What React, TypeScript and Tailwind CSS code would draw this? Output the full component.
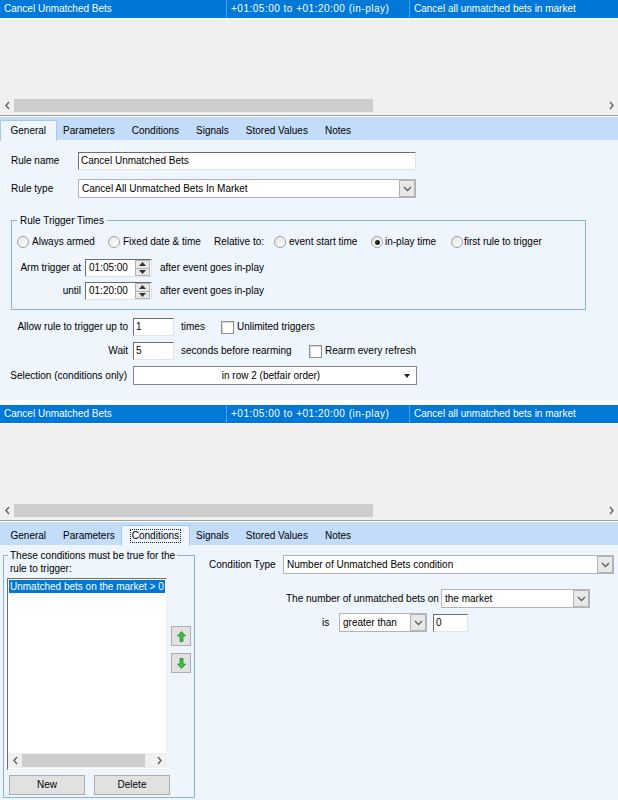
import React from "react"

const TABS = ["General", "Parameters", "Conditions", "Signals", "Stored Values", "Notes"]

function Chevron({ dir }: { dir: "left" | "right" | "down" }) {
  const d = dir === "left" ? "M5 1 L2 4.5 L5 8" : dir === "right" ? "M2 1 L5 4.5 L2 8" : "M1 2 L4.5 5.5 L8 2"
  const w = dir === "down" ? 9 : 7
  const h = dir === "down" ? 7 : 9
  return (
    <svg width={w} height={h} viewBox={`0 0 ${w} ${h}`} fill="none">
      <path d={d} stroke="#606060" strokeWidth="1.4" />
    </svg>
  )
}

function HScroll({ thumb }: { thumb: number }) {
  return (
    <div className="h-[15px] flex items-center bg-[#f0f0f0]">
      <div className="w-[14px] h-full flex items-center justify-center">
        <Chevron dir="left" />
      </div>
      <div className="flex-1 h-full flex items-center">
        <div className="h-[13px] bg-[#cdcdcd]" style={{ width: thumb }} />
      </div>
      <div className="w-[14px] h-full flex items-center justify-center">
        <Chevron dir="right" />
      </div>
    </div>
  )
}

function RuleList() {
  return (
    <div className="h-[116px] flex flex-col bg-[#f0f0f0] border-b border-b-[#a0a0a0]">
      <div className="h-[19px] flex bg-[#0078d7] text-white border-b border-white">
        <div className="w-[227px] pl-[4px] flex items-center border-r border-[#4ba1e4]">Cancel Unmatched Bets</div>
        <div className="w-[183px] pl-[4px] flex items-center border-r border-[#4ba1e4] tracking-[0.5px]">
          +01:05:00 to +01:20:00 (in-play)
        </div>
        <div className="flex-1 pl-[4px] flex items-center">Cancel all unmatched bets in market</div>
      </div>
      <div className="flex-1" />
      <HScroll thumb={359} />
      <div className="h-[2px]" />
    </div>
  )
}

function TabStrip({ active, focused }: { active: string; focused?: boolean }) {
  return (
    <div className="h-[24px] flex items-end pl-[2px] bg-[#c3dcf9] border-t border-white">
      {TABS.map((t) =>
        t === active ? (
          <div
            key={t}
            className={`relative -mx-[2px] ${focused ? "px-[7.5px]" : "px-[9.5px]"} h-[21px] -mb-[1px] flex items-center bg-[#eef5fd] border border-b-0 border-[#a9c8ef] rounded-t-[2px] z-10`}
          >
            {focused ? (
              <span className="border border-dotted border-[#222] px-[1px] leading-[12px]">{t}</span>
            ) : (
              t
            )}
          </div>
        ) : (
          <div key={t} className="px-[8.5px] h-[19px] flex items-center">
            {t}
          </div>
        )
      )}
    </div>
  )
}

function Radio({ checked }: { checked?: boolean }) {
  return (
    <span className="w-[12px] h-[12px] rounded-full border border-[#a0a0a0] bg-gradient-to-br from-[#e4e4e4] to-white flex items-center justify-center shrink-0">
      {checked && <span className="w-[5px] h-[5px] rounded-full bg-[#222]" />}
    </span>
  )
}

function Check() {
  return <span className="w-[13px] h-[13px] border border-[#8f8f8f] bg-white shrink-0 shadow-[inset_1px_1px_1px_#d8d8d8]" />
}

function TextBox({ w, value }: { w: number; value: string }) {
  return (
    <div
      className="h-[18px] bg-white border border-[#e3e3e3] border-t-[#6d6d6d] border-l-[#6d6d6d] flex items-center pl-[2px]"
      style={{ width: w }}
    >
      {value}
    </div>
  )
}

function Combo({ w, value }: { w: number; value: string }) {
  return (
    <div className="h-[19px] bg-white border border-[#b4b4b4] flex items-center" style={{ width: w }}>
      <span className="flex-1 pl-[3px]">{value}</span>
      <span className="w-[16px] h-[17px] bg-[#e8e8e8] border border-[#b4b4b4] flex items-center justify-center">
        <Chevron dir="down" />
      </span>
    </div>
  )
}

function TimeBox({ value }: { value: string }) {
  return (
    <div className="w-[67px] h-[18px] bg-white border border-[#e3e3e3] border-t-[#6d6d6d] border-l-[#6d6d6d] flex items-center">
      <span className="flex-1 pl-[3px]">{value}</span>
      <span className="w-[15px] h-[16px] flex flex-col bg-[#e8e8e8] border border-[#b4b4b4] mr-[1px]">
        <span className="flex-1 flex items-center justify-center border-b border-[#b4b4b4]">
          <svg width="7" height="4" viewBox="0 0 7 4"><path d="M0 4 L3.5 0 L7 4 Z" fill="#333" /></svg>
        </span>
        <span className="flex-1 flex items-center justify-center">
          <svg width="7" height="4" viewBox="0 0 7 4"><path d="M0 0 L3.5 4 L7 0 Z" fill="#333" /></svg>
        </span>
      </span>
    </div>
  )
}

function GeneralTab() {
  return (
    <div className="flex-1 bg-[#eef5fd] pt-[12px]">
      <div className="flex items-center h-[18px] pl-[11px]">
        <span className="w-[67px]">Rule name</span>
        <TextBox w={338} value="Cancel Unmatched Bets" />
      </div>
      <div className="flex items-center h-[19px] mt-[9px] pl-[11px]">
        <span className="w-[67px]">Rule type</span>
        <Combo w={338} value="Cancel All Unmatched Bets In Market" />
      </div>

      <div className="relative ml-[11px] mt-[22px] w-[575px] h-[90px] border border-[#88b0e8]">
        <span className="absolute -top-[7px] left-[5px] px-[3px] bg-[#eef5fd] leading-[13px]">Rule Trigger Times</span>
        <div className="flex items-center h-[14px] mt-[14px] ml-[5px]">
          <div className="w-[91px] flex items-center gap-[3px]"><Radio /><span>Always armed</span></div>
          <div className="w-[106px] flex items-center gap-[3px]"><Radio /><span>Fixed date &amp; time</span></div>
          <div className="w-[60px]">Relative to:</div>
          <div className="w-[97px] flex items-center gap-[3px]"><Radio /><span>event start time</span></div>
          <div className="w-[80px] flex items-center gap-[2px]"><Radio checked /><span>in-play time</span></div>
          <div className="flex items-center gap-[1px]"><Radio /><span>first rule to trigger</span></div>
        </div>
        <div className="flex items-center h-[18px] mt-[10px]">
          <span className="w-[69px] text-right">Arm trigger at</span>
          <span className="ml-[4px]"><TimeBox value="01:05:00" /></span>
          <span className="ml-[8px]">after event goes in-play</span>
        </div>
        <div className="flex items-center h-[18px] mt-[5px]">
          <span className="w-[69px] text-right">until</span>
          <span className="ml-[4px]"><TimeBox value="01:20:00" /></span>
          <span className="ml-[8px]">after event goes in-play</span>
        </div>
      </div>

      <div className="flex items-center h-[18px] mt-[8px]">
        <span className="w-[128px] text-right">Allow rule to trigger up to</span>
        <span className="ml-[5px]"><TextBox w={41} value="1" /></span>
        <span className="ml-[7px] w-[40px]">times</span>
        <Check />
        <span className="ml-[3px]">Unlimited triggers</span>
      </div>
      <div className="flex items-center h-[18px] mt-[6px]">
        <span className="w-[128px] text-right">Wait</span>
        <span className="ml-[5px]"><TextBox w={41} value="5" /></span>
        <span className="ml-[7px] w-[128px]">seconds before rearming</span>
        <Check />
        <span className="ml-[3px]">Rearm every refresh</span>
      </div>
      <div className="flex items-center h-[19px] mt-[6px]">
        <span className="w-[127px] text-right">Selection (conditions only)</span>
        <div className="ml-[6px] w-[284px] h-[19px] bg-white border border-[#858585] flex items-center">
          <span className="flex-1 text-center pl-[4px]">in row 2 (betfair order)</span>
          <svg width="6" height="4" viewBox="0 0 6 4" className="mr-[6px]"><path d="M0 0 L3 4 L6 0 Z" fill="#222" /></svg>
        </div>
      </div>
    </div>
  )
}

function MoveButton({ up }: { up?: boolean }) {
  return (
    <div className="w-[20px] h-[20px] bg-[#e1e1e1] border border-[#adadad] flex items-center justify-center">
      <svg width="9" height="11" viewBox="0 0 9 11" style={up ? undefined : { transform: "rotate(180deg)" }}>
        <path d="M4.5 0.5 L8.5 5 L6 5 L6 10.5 L3 10.5 L3 5 L0.5 5 Z" fill="#3fbf3f" stroke="#2a8a2a" strokeWidth="0.8" />
      </svg>
    </div>
  )
}

function ConditionsTab() {
  return (
    <div className="flex-1 bg-[#eef5fd] flex">
      <div className="relative ml-[3px] mt-[10px] w-[192px] h-[243px] border border-[#88b0e8] flex flex-col">
        <span className="absolute -top-[7px] left-[4px] px-[2px] bg-[#eef5fd] leading-[13px]">
          These conditions must be true for the
          <br />
          rule to trigger:
        </span>
        <div className="flex mt-[22px] ml-[3px]">
          <div className="w-[160px] h-[192px] bg-white border border-[#f0f0f0] border-t-[#6d6d6d] border-l-[#6d6d6d] flex flex-col overflow-hidden">
            <div className="mt-[1px] mx-[1px] h-[13px] bg-[#0078d7] text-white flex items-center pl-[1px] overflow-hidden">
              Unmatched bets on the market &gt; 0
            </div>
            <div className="flex-1" />
            <div className="mb-[1px]">
              <HScroll thumb={123} />
            </div>
          </div>
          <div className="ml-[4px] mt-[48px] flex flex-col gap-[7px]">
            <MoveButton up />
            <MoveButton />
          </div>
        </div>
        <div className="flex mt-[5px] ml-[5px] gap-[9px]">
          <div className="w-[76px] h-[20px] bg-[#e1e1e1] border border-[#adadad] flex items-center justify-center">New</div>
          <div className="w-[76px] h-[20px] bg-[#e1e1e1] border border-[#adadad] flex items-center justify-center">Delete</div>
        </div>
      </div>

      <div className="flex flex-col">
        <div className="flex items-center h-[19px] mt-[10px] ml-[14px]">
          <span className="w-[74px]">Condition Type</span>
          <Combo w={331} value="Number of Unmatched Bets condition" />
        </div>
        <div className="flex items-center h-[19px] mt-[15px] ml-[91px]">
          <span className="w-[155px]">The number of unmatched bets on</span>
          <Combo w={149} value="the market" />
        </div>
        <div className="flex items-center h-[19px] mt-[5px] ml-[127px]">
          <span className="w-[17px]">is</span>
          <Combo w={88} value="greater than" />
          <span className="ml-[6px]"><TextBox w={35} value="0" /></span>
        </div>
      </div>
    </div>
  )
}

export default function App() {
  return (
    <div className="w-[618px] h-[800px] overflow-hidden bg-white text-black text-[10px] leading-none whitespace-nowrap font-['Liberation_Sans',Arial,sans-serif]">
      <div className="h-[400px] flex flex-col overflow-hidden">
        <RuleList />
        <TabStrip active="General" />
        <GeneralTab />
      </div>
      <div className="h-[400px] flex flex-col overflow-hidden pt-[5px] bg-white">
        <RuleList />
        <TabStrip active="Conditions" focused />
        <ConditionsTab />
      </div>
    </div>
  )
}
